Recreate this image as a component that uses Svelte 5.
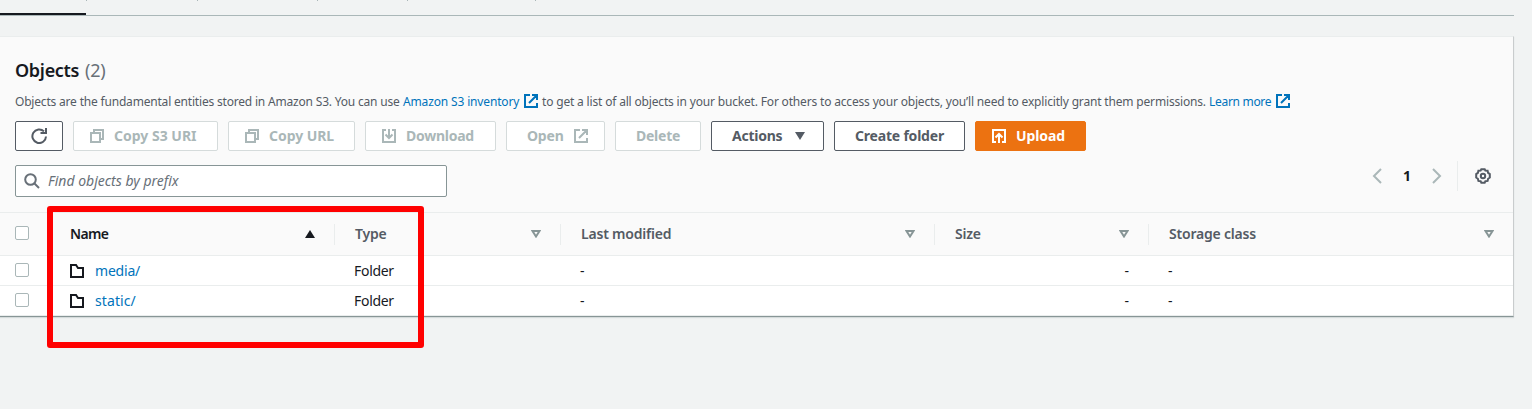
<script>
  const rows = [{ name: 'media/', ls: -0.2 }, { name: 'static/', ls: 0.1 }];
  const ticks = [86, 197, 317, 407, 535];
</script>

{#snippet external()}
  <svg class="icon" viewBox="0 0 14 14"><path d="M6 1H1v12h12V9M8 1h5v5M12.5 1.5L5 9" /></svg>
{/snippet}
{#snippet copy()}
  <svg class="icon" viewBox="0 0 14 14"><path d="M4 4V1h9v9h-3M1 4h9v9H1z" /></svg>
{/snippet}
{#snippet sort()}
  <svg class="sort" viewBox="0 0 10 8"><path d="M1.5 1h7L5 6.5z" /></svg>
{/snippet}

<div class="page">
  <div class="tabs">
    {#each ticks as t}<i class="tick" style:left="{t}px"></i>{/each}
    <div class="active"></div>
  </div>
  <section class="card">
    <header>
      <h2><span class="title">Objects</span><span class="count">(2)</span></h2>
      <p>
        <span class="d1">Objects are the fundamental entities stored in Amazon S3. You can use</span>
        <a class="d2">Amazon S3 inventory</a>
        {@render external()}
        <span class="d3">to get a list of all objects in your bucket. For others to access your objects, you’ll need to explicitly grant them permissions.</span>
        <a class="d4">Learn more</a>
        {@render external()}
      </p>
      <div class="buttons">
        <button class="refresh" aria-label="Refresh"><svg class="icon16" viewBox="0 0 16 16"><path d="M15 8.5A6.8 6.8 0 1 1 13 3.4M15 0v5H9.5" /></svg></button>
        <button class="off uri">{@render copy()}<span>Copy S3 URI</span></button>
        <button class="off url">{@render copy()}<span>Copy URL</span></button>
        <button class="off dl"><svg class="icon" viewBox="0 0 14 14"><path d="M4 1H1v12h12V1h-3M7 0v9M3.5 5.5L7 9l3.5-3.5" /></svg><span>Download</span></button>
        <button class="off open"><span>Open</span>{@render external()}</button>
        <button class="off del"><span>Delete</span></button>
        <button class="act"><span>Actions</span><svg class="caret" viewBox="0 0 10 8"><path d="M0 0h10L5 8z" /></svg></button>
        <button class="create"><span>Create folder</span></button>
        <button class="up"><svg class="icon" viewBox="0 0 14 14"><path d="M4 13H1V1h12v12h-3M7 14V5M3.5 8.5L7 5l3.5 3.5" /></svg><span>Upload</span></button>
      </div>
      <div class="tools">
        <div class="search">
          <svg class="icon16" viewBox="0 0 16 16"><circle cx="6.5" cy="6.5" r="5.3" /><path d="M10.5 10.5L15 15" /></svg>
          <span>Find objects by prefix</span>
        </div>
        <div class="pager">
          <svg class="chev" viewBox="0 0 10 16"><path d="M9 1L2 8l7 7" /></svg>
          <b>1</b>
          <svg class="chev" viewBox="0 0 10 16"><path d="M1 1l7 7-7 7" /></svg>
          <i></i>
          <svg class="gear" viewBox="0 0 16 16"><path d="M6.3 1.2h3.4l.7 1.4 2.2.2.5 2.1 1.7 1.2v3.5l-1.7 1.2-.5 2.1-2.2.3-.7 1.5H6.3l-.7-1.5-2.2-.3-.5-2.1-1.7-1.2V6.1l1.7-1.2.5-2.1 2.2-.2z" /><circle cx="8" cy="8" r="2.2" /></svg>
        </div>
      </div>
    </header>
    <div class="row head">
      <div class="check"><i></i></div>
      <div class="name dark"><span>Name</span><svg class="sort up-arrow" viewBox="0 0 10 8"><path d="M0 8h10L5 0z" /></svg></div>
      <div class="type"><span>Type</span>{@render sort()}</div>
      <div class="mod"><span>Last modified</span>{@render sort()}</div>
      <div class="size"><span>Size</span>{@render sort()}</div>
      <div class="storage"><span>Storage class</span>{@render sort()}</div>
    </div>
    {#each rows as r}
      <div class="row item">
        <div class="check"><i></i></div>
        <div class="name"><svg class="folder" viewBox="0 0 14 14"><path d="M1 1h5l2 3h5v9H1z" /></svg><a style:letter-spacing="{r.ls}px">{r.name}</a></div>
        <div class="type"><span>Folder</span></div>
        <div class="mod">-</div>
        <div class="size">-</div>
        <div class="storage">-</div>
      </div>
    {/each}
  </section>
  <div class="marker"></div>
</div>

<style>
  :global(body) { background: #f2f3f3; }
  .page { position: relative; height: 409px; overflow: hidden; background: #f1f3f3; font-family: "Noto Sans", "Open Sans", sans-serif; font-size: 14px; color: #16191f; }
  .page * { box-sizing: border-box; }
  .tabs { position: relative; width: 1514px; height: 16px; border-bottom: 1px solid #aab7b8; display: flex; align-items: flex-end; }
  .tick { position: absolute; top: 0; width: 1px; height: 1px; background: #aab7b8; }
  .active { width: 86px; height: 2px; background: #16191f; }
  svg { display: block; flex: none; fill: none; stroke: currentColor; stroke-width: 2; }
  .icon { width: 14px; height: 14px; }
  .icon16 { width: 16px; height: 16px; }
  .card { width: 1514px; margin-top: 20px; border-top: 1px solid #eaeded; border-right: 1px solid #c9cccd; border-bottom: 1px solid #879596; background: #fff; box-shadow: 0 1px 1px #d5dbdb; }
  header { height: 175px; padding: 21px 15px 0; background: #fafafa; }
  h2 { display: flex; gap: 6px; margin: 0; height: 24px; font-size: 18px; line-height: 24px; font-weight: 600; }
  .title { width: 64px; letter-spacing: -0.3px; }
  .count { color: #687078; font-weight: 400; font-size: 18px; letter-spacing: -0.2px; }
  p { display: flex; align-items: center; margin: 10px 0 0; height: 18px; font-size: 12px; line-height: 18px; color: #545b64; white-space: nowrap; }
  p span, p a { padding-top: 1px; }
  a { color: #0073bb; }
  p .icon { color: #0073bb; }
  .d1 { width: 388px; letter-spacing: -0.19px; }
  .d2 { width: 121px; letter-spacing: -0.15px; }
  .d3 { width: 667px; margin-left: 4px; letter-spacing: -0.172px; }
  .d4 { width: 67px; letter-spacing: -0.3px; }
  .buttons { display: flex; gap: 10px; margin-top: 11px; }
  button { display: flex; align-items: center; height: 30px; padding: 0 0 0 20px; gap: 10px; border: 1px solid #545b64; border-radius: 2px; background: #fff; color: #545b64; font: 700 14px/20px "Noto Sans", sans-serif; letter-spacing: -0.25px; white-space: nowrap; }
  .off { color: #aab7b8; border-color: #d5dbdb; }
  .refresh { width: 48px; padding-left: 15px; }
  .uri { width: 145px; padding-left: 16px; letter-spacing: 0; }
  .url { width: 127px; padding-left: 16px; letter-spacing: -0.05px; }
  .dl { width: 131px; padding-left: 16px; }
  .open { width: 99px; letter-spacing: -0.2px; }
  .del { width: 86px; }
  .act { width: 113px; gap: 12px; }
  .create { width: 131px; letter-spacing: -0.2px; }
  .up { width: 111px; padding-left: 16px; letter-spacing: -0.1px; background: #ec7211; border-color: #ec7211; color: #fff; }
  .caret { width: 10px; height: 8px; margin-left: 1px; fill: currentColor; stroke: none; }
  .tools { display: flex; justify-content: space-between; margin-top: 14px; }
  .search { display: flex; align-items: center; width: 432px; height: 32px; padding-left: 8px; gap: 8px; border: 1px solid #879596; border-radius: 2px; background: #fff; color: #687078; font-style: italic; }
  .search span { padding-bottom: 2px; }
  .pager { display: flex; align-items: center; height: 30px; margin-top: -4px; padding-right: 7px; color: #545b64; }
  .chev { width: 10px; height: 16px; color: #aab7b8; }
  .pager b { width: 50px; padding-bottom: 2px; text-align: center; color: #16191f; }
  .pager i { width: 1px; height: 30px; margin: 0 17px 0 15px; background: #eaeded; }
  .gear { width: 16px; height: 16px; }
  .row { display: grid; grid-template-columns: 50px 285px 226px 374px 214px 1fr; border-top: 1px solid #eaeded; }
  .row > div { display: flex; align-items: center; }
  .head { height: 44px; background: #fafafa; border-bottom: 1px solid #eaeded; color: #545b64; font-weight: 600; letter-spacing: -0.2px; }
  .head > div { justify-content: space-between; height: 21px; margin-top: 11px; padding: 0 19px 2px 20px; }
  .head > div:not(.check, .storage) { border-right: 1px solid #eaeded; }
  .head .name span { letter-spacing: -0.7px; }
  .item { height: 30px; }
  .head + .item { height: 29px; border-top: 0; }
  .item:last-child { height: 31px; border-bottom: 1px solid #eaeded; }
  .item > div { padding: 0 20px 0 19px; }
  .item .type span { letter-spacing: -0.3px; }
  .row .check { padding: 0 0 2px 15px; justify-content: flex-start; }
  .head .check { padding-bottom: 4px; }
  .check i { width: 14px; height: 14px; border: 1px solid #aab7b8; border-radius: 2px; background: #fff; }
  .dark { color: #16191f; }
  .sort { width: 10px; height: 8px; color: #879596; }
  .up-arrow { fill: #16191f; stroke: none; }
  .item .name { padding-left: 20px; gap: 11px; }
  .item .size { justify-content: flex-end; }
  .folder { width: 14px; height: 14px; }
  .marker { position: absolute; left: 47px; top: 206px; width: 377px; height: 142px; border: 6px solid #f00; border-radius: 3px; }
</style>
